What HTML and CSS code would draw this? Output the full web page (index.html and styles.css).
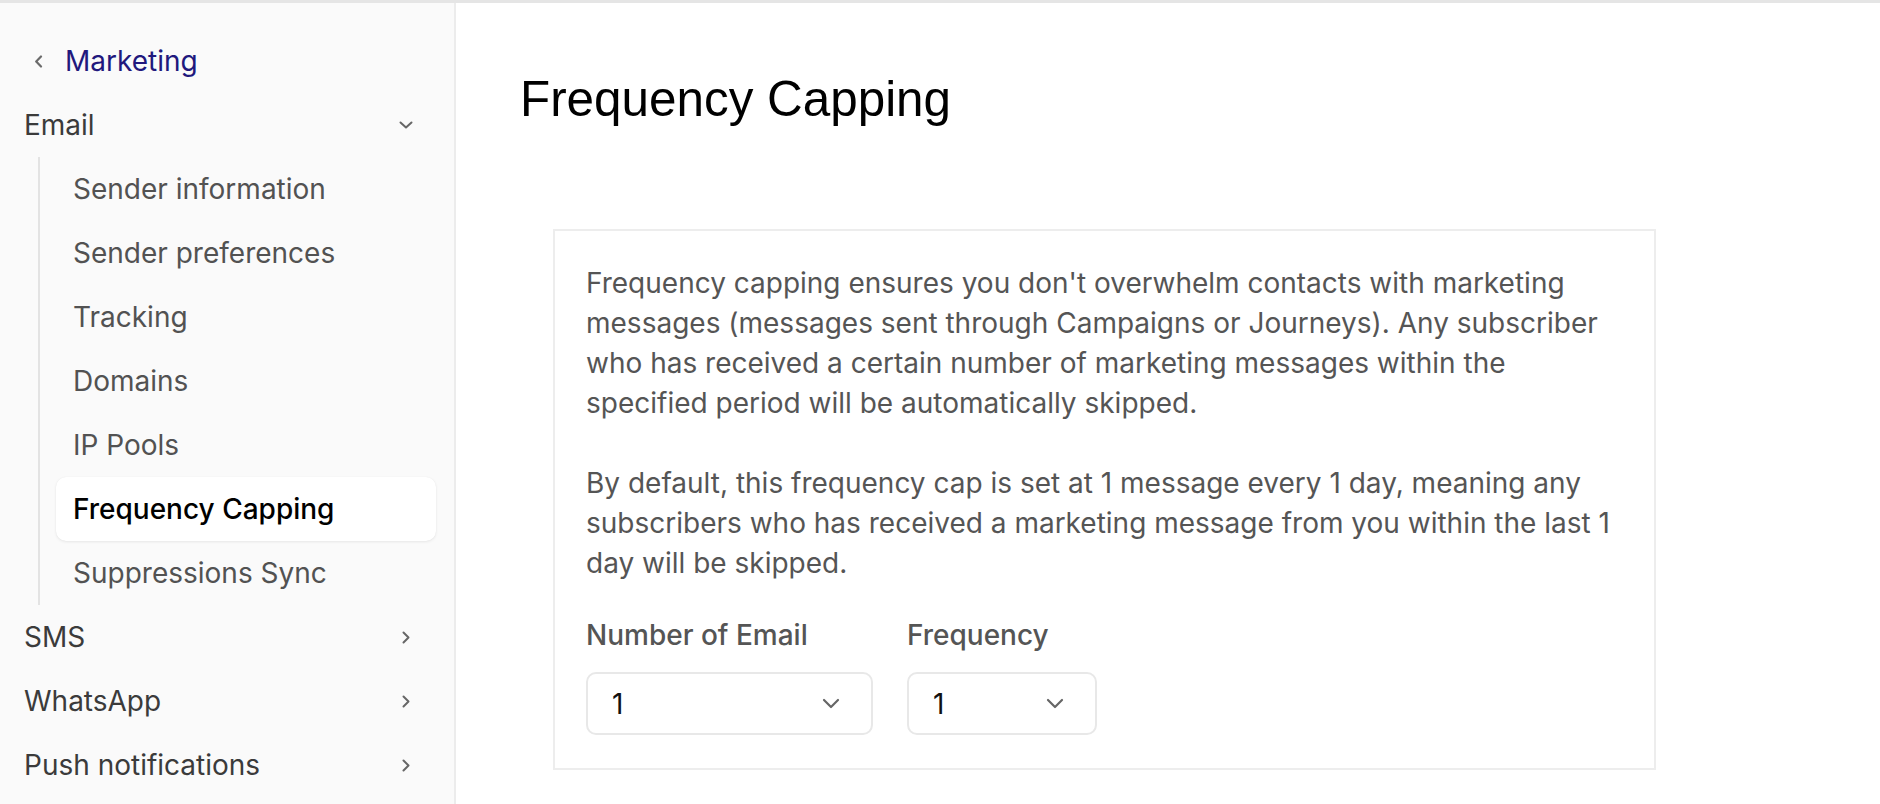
FILE: index.html
```html
<!DOCTYPE html>
<html lang="en">
<head>
<meta charset="utf-8">
<title>Frequency Capping</title>
<link rel="stylesheet" href="styles.css">
</head>
<body>
<div class="app">
  <aside class="sidebar">
    <a class="back" href="#">
      <svg class="back-icon" width="10" height="13" viewBox="0 0 10 13"><polyline points="7,1.5 2.2,6.5 7,11.5" fill="none" stroke="#6b6b6b" stroke-width="2.2" stroke-linecap="round" stroke-linejoin="round"/></svg>
      <span>Marketing</span>
    </a>
    <div class="group-head">
      <span>Email</span>
      <span class="chev"><svg width="14" height="8" viewBox="0 0 14 8"><polyline points="1.5,1.5 7,6.5 12.5,1.5" fill="none" stroke="#666" stroke-width="2" stroke-linecap="round" stroke-linejoin="round"/></svg></span>
    </div>
    <ul class="sub">
      <li class="sub-item">Sender information</li>
      <li class="sub-item">Sender preferences</li>
      <li class="sub-item">Tracking</li>
      <li class="sub-item">Domains</li>
      <li class="sub-item">IP Pools</li>
      <li class="sub-item active">Frequency Capping</li>
      <li class="sub-item">Suppressions Sync</li>
    </ul>
    <div class="group-head">
      <span>SMS</span>
      <span class="chev"><svg width="8" height="13" viewBox="0 0 8 13"><polyline points="1.5,1.5 6.5,6.5 1.5,11.5" fill="none" stroke="#666" stroke-width="2" stroke-linecap="round" stroke-linejoin="round"/></svg></span>
    </div>
    <div class="group-head">
      <span>WhatsApp</span>
      <span class="chev"><svg width="8" height="13" viewBox="0 0 8 13"><polyline points="1.5,1.5 6.5,6.5 1.5,11.5" fill="none" stroke="#666" stroke-width="2" stroke-linecap="round" stroke-linejoin="round"/></svg></span>
    </div>
    <div class="group-head">
      <span>Push notifications</span>
      <span class="chev"><svg width="8" height="13" viewBox="0 0 8 13"><polyline points="1.5,1.5 6.5,6.5 1.5,11.5" fill="none" stroke="#666" stroke-width="2" stroke-linecap="round" stroke-linejoin="round"/></svg></span>
    </div>
  </aside>
  <main class="main">
    <h1 class="title">Frequency Capping</h1>
    <section class="card">
      <p class="para">Frequency capping ensures you don't overwhelm contacts with marketing messages (messages sent through Campaigns or Journeys). Any subscriber who has received a certain number of marketing messages within the specified period will be automatically skipped.</p>
      <p class="para last">By default, this frequency cap is set at 1 message every 1 day, meaning any subscribers who has received a marketing message from you within the last 1 day will be skipped.</p>
      <div class="fields">
        <div class="field">
          <label class="label">Number of Email</label>
          <div class="select wide">
            <span>1</span>
            <svg width="18" height="11" viewBox="0 0 18 11"><polyline points="2,2 9,9 16,2" fill="none" stroke="#666" stroke-width="2.2" stroke-linecap="round" stroke-linejoin="round"/></svg>
          </div>
        </div>
        <div class="field">
          <label class="label">Frequency</label>
          <div class="select narrow">
            <span>1</span>
            <svg width="18" height="11" viewBox="0 0 18 11"><polyline points="2,2 9,9 16,2" fill="none" stroke="#666" stroke-width="2.2" stroke-linecap="round" stroke-linejoin="round"/></svg>
          </div>
        </div>
      </div>
    </section>
  </main>
</div>
</body>
</html>
```
FILE: styles.css
```css
* { box-sizing: border-box; }
html, body { margin: 0; padding: 0; }
body {
  font-family: Inter, "Noto Sans", sans-serif;
  background: #ffffff;
  border-top: 3px solid #e5e5e5;
  height: 804px;
  overflow: hidden;
}
.app {
  display: flex;
  height: 801px;
}
.sidebar {
  width: 456px;
  flex: 0 0 456px;
  background: #fafafa;
  border-right: 2px solid #ececec;
  padding: 26px 18px 0 24px;
  font-size: 28px;
}
.back {
  display: flex;
  align-items: center;
  height: 64px;
  padding-left: 10px;
  gap: 21px;
  color: #21187d;
  text-decoration: none;
}
.back-icon { flex: 0 0 auto; }
.group-head {
  display: flex;
  align-items: center;
  justify-content: space-between;
  height: 64px;
  color: #3b3b3b;
}
.chev {
  width: 14px;
  margin-right: 23px;
  display: flex;
  justify-content: center;
  align-items: center;
}
.sub {
  list-style: none;
  margin: 0 0 0 14px;
  padding: 0;
  border-left: 2px solid #e3e3e3;
}
.sub-item {
  height: 64px;
  margin-left: 16px;
  padding-left: 17px;
  display: flex;
  align-items: center;
  color: #525252;
  border-radius: 10px;
}
.sub-item.active {
  background: #ffffff;
  color: #000000;
  font-weight: 500;
  box-shadow: 0 1px 3px rgba(0, 0, 0, 0.08), 0 0 1px rgba(0, 0, 0, 0.06);
}
.main {
  flex: 1;
  padding: 68px 0 0 64px;
}
.title {
  margin: 0;
  font-family: "Liberation Sans", Arial, sans-serif;
  font-size: 49.4px;
  font-weight: 400;
  line-height: 56px;
  color: #000;
}
.card {
  margin: 102px 0 0 33px;
  width: 1103px;
  border: 2px solid #ededed;
  padding: 32px 31px 33px 31px;
}
.para {
  margin: 0 0 40px;
  font-size: 28px;
  line-height: 40px;
  color: #555555;
}
.para.last { margin-bottom: 0; }
.fields {
  display: flex;
  gap: 34px;
  margin-top: 32px;
}
.field {
  display: flex;
  flex-direction: column;
}
.label {
  font-size: 28px;
  font-weight: 500;
  line-height: 40px;
  color: #555555;
  margin-bottom: 17px;
}
.select {
  height: 63px;
  border: 2px solid #e8e8e8;
  border-radius: 10px;
  padding: 0 31px 0 24px;
  display: flex;
  align-items: center;
  justify-content: space-between;
  font-size: 28px;
  color: #111;
}
.select.wide { width: 287px; }
.select.narrow { width: 190px; }
```
